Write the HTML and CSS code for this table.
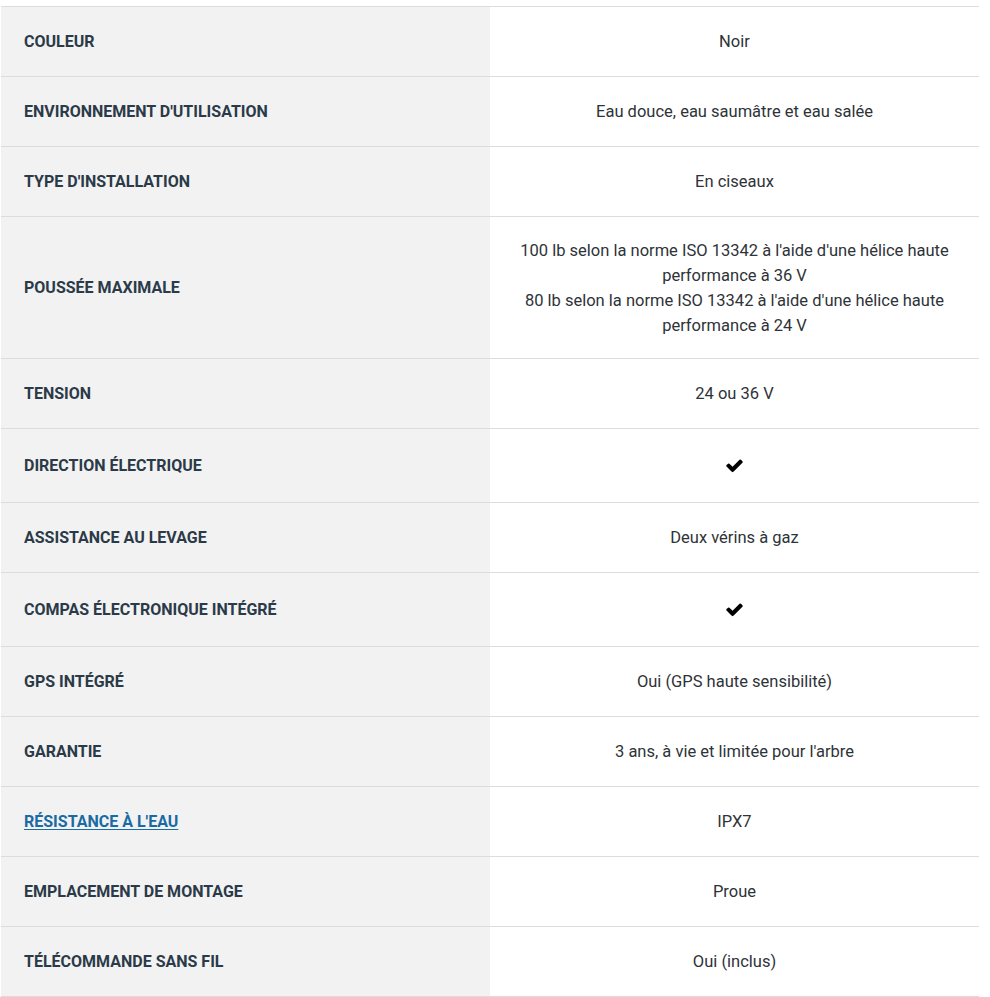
FILE: index.html
```html
<!DOCTYPE html>
<html lang="fr">
<head>
<meta charset="utf-8">
<title>Caractéristiques</title>
<link rel="stylesheet" href="styles.css">
</head>
<body>
<div class="specs">
  <table class="spec-table">
    <tbody>
      <tr><th>COULEUR</th><td>Noir</td></tr>
      <tr><th>ENVIRONNEMENT D'UTILISATION</th><td>Eau douce, eau saumâtre et eau salée</td></tr>
      <tr><th>TYPE D'INSTALLATION</th><td>En ciseaux</td></tr>
      <tr><th>POUSSÉE MAXIMALE</th><td class="multi">100 lb selon la norme ISO 13342 à l'aide d'une hélice haute performance à 36 V<br>80 lb selon la norme ISO 13342 à l'aide d'une hélice haute performance à 24 V</td></tr>
      <tr><th>TENSION</th><td>24 ou 36 V</td></tr>
      <tr><th>DIRECTION ÉLECTRIQUE</th><td><div class="check"><svg viewBox="0 0 1792 1792" width="19" height="19" aria-hidden="true"><path d="M1671 566q0 40-28 68l-724 724-136 136q-28 28-68 28t-68-28l-136-136-362-362q-28-28-28-68t28-68l136-136q28-28 68-28t68 28l294 295 656-657q28-28 68-28t68 28l136 136q28 28 28 68z"/></svg></div></td></tr>
      <tr><th>ASSISTANCE AU LEVAGE</th><td>Deux vérins à gaz</td></tr>
      <tr><th>COMPAS ÉLECTRONIQUE INTÉGRÉ</th><td><div class="check"><svg viewBox="0 0 1792 1792" width="19" height="19" aria-hidden="true"><path d="M1671 566q0 40-28 68l-724 724-136 136q-28 28-68 28t-68-28l-136-136-362-362q-28-28-28-68t28-68l136-136q28-28 68-28t68 28l294 295 656-657q28-28 68-28t68 28l136 136q28 28 28 68z"/></svg></div></td></tr>
      <tr><th>GPS INTÉGRÉ</th><td>Oui (GPS haute sensibilité)</td></tr>
      <tr><th>GARANTIE</th><td>3 ans, à vie et limitée pour l'arbre</td></tr>
      <tr><th><a href="#" class="spec-link">RÉSISTANCE À L'EAU</a></th><td>IPX7</td></tr>
      <tr><th>EMPLACEMENT DE MONTAGE</th><td>Proue</td></tr>
      <tr><th>TÉLÉCOMMANDE SANS FIL</th><td>Oui (inclus)</td></tr>
    </tbody>
  </table>
</div>
</body>
</html>
```

FILE: styles.css
```css
* { box-sizing: border-box; }
html, body {
  margin: 0;
  padding: 0;
  background: #fff;
}
body {
  font-family: Roboto, "Liberation Sans", Arial, sans-serif;
  font-size: 16px;
  line-height: 25px;
  color: #333;
}
.specs {
  padding: 6px 0 0 1px;
  width: 979px;
}
.spec-table {
  width: 978px;
  border-collapse: collapse;
  table-layout: fixed;
  border-top: 1px solid #dcdcdc;
}
.spec-table tr {
  border-bottom: 1px solid #dcdcdc;
}
.spec-table th {
  width: 489px;
  background: #f2f2f2;
  text-align: left;
  font-weight: 700;
  color: #2b3a48;
  padding: 22px 23px;
  vertical-align: middle;
}
.spec-table td {
  text-align: center;
  color: #2e3338;
  font-size: 16.5px;
  padding: 22px 20px;
  vertical-align: middle;
}
.spec-table td.multi {
  padding-top: 21px;
  padding-bottom: 20px;
}
.spec-link {
  color: #1a6aa3;
  text-decoration: underline;
  text-underline-offset: 2px;
}
.check {
  display: flex;
  height: 29px;
  align-items: center;
  justify-content: center;
}
.check svg {
  display: block;
  fill: #000;
}
```
